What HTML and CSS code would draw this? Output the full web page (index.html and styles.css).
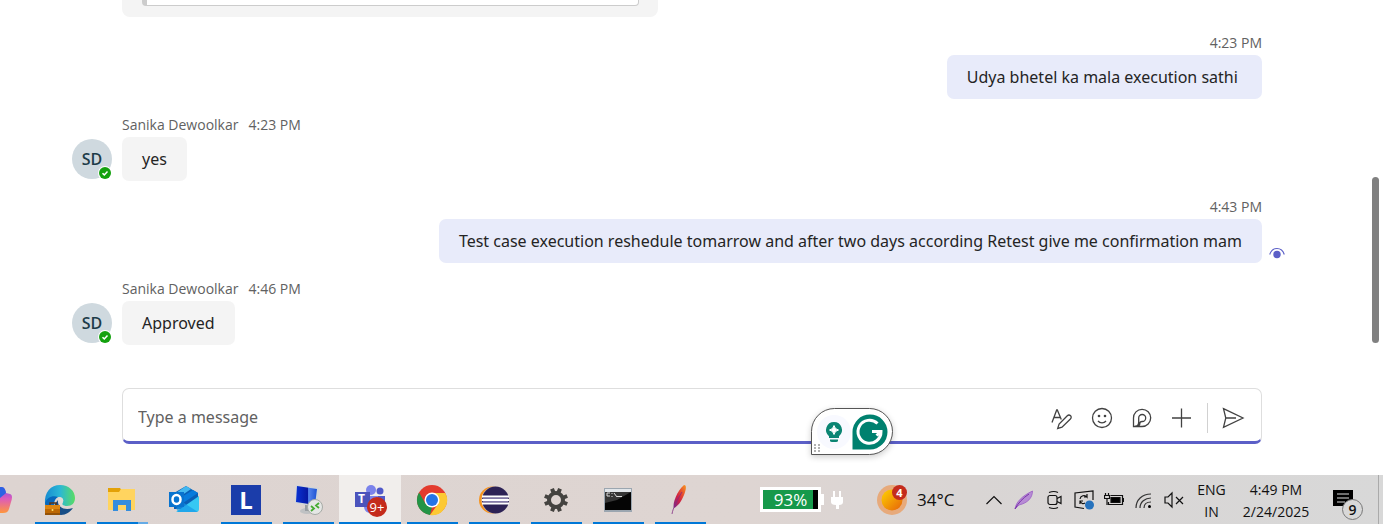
FILE: index.html
```
<!DOCTYPE html>
<html lang="en">

<head>
  <meta charset="UTF-8">
  <meta name="viewport" content="width=device-width, initial-scale=1.0">
  <title>Chat</title>
  <link rel="stylesheet" href="styles.css">
</head>

<body>
  <main class="chat">
    <div class="messages">
      <div class="card">
        <div class="quote"></div>
      </div>

      <div class="message mine">
        <div class="meta"><time>4:23 PM</time></div>
        <p class="bubble">Udya bhetel ka mala execution sathi&nbsp;</p>
      </div>

      <div class="message">
        <div class="avatar">SD
          <svg class="presence" viewBox="0 0 14 14"><circle cx="7" cy="7" r="7" fill="#fff"/><circle cx="7" cy="7" r="6" fill="#13a10e"/><path d="M4.5 7.2l1.8 1.7 3.2-3.4" fill="none" stroke="#fff" stroke-width="1.5"/></svg>
        </div>
        <div class="meta"><span>Sanika Dewoolkar</span><time>4:23 PM</time></div>
        <p class="bubble">yes</p>
      </div>

      <div class="message mine">
        <div class="meta"><time>4:43 PM</time></div>
        <p class="bubble">Test case execution reshedule tomarrow and after two days according Retest give me confirmation mam</p>
        <svg class="seen" viewBox="0 0 16 12"><path d="M.7 7.5C2 3.400 4.700 1.500 8 1.500s6 1.900 7.300 6" fill="none" stroke="#5b5fc7" stroke-width="1.100"/><circle cx="8" cy="7.500" r="3.700" fill="#5b5fc7"/></svg>
      </div>

      <div class="message">
        <div class="avatar">SD
          <svg class="presence" viewBox="0 0 14 14"><circle cx="7" cy="7" r="7" fill="#fff"/><circle cx="7" cy="7" r="6" fill="#13a10e"/><path d="M4.5 7.2l1.8 1.7 3.2-3.4" fill="none" stroke="#fff" stroke-width="1.5"/></svg>
        </div>
        <div class="meta"><span>Sanika Dewoolkar</span><time>4:46 PM</time></div>
        <p class="bubble">Approved</p>
      </div>
    </div>

    <form class="composer">
      <input type="text" aria-label="Type a message" placeholder="Type a message">
      <button type="button" aria-label="Format">
        <svg viewBox="0 0 24 24"><path d="M2 16.500L6.700 4h.6l4 9.500M4 11.500h6"/><path d="M20.600 9.800c-1-1-2.400-.9-3.300 0l-8.200 8.300-1.400 4.300 4.300-1.300 8.400-8.100c.9-.9 1.100-2.300.2-3.200z"/></svg>
      </button>
      <button type="button" aria-label="Emoji">
        <svg viewBox="0 0 24 24"><circle cx="12" cy="12" r="9.500"/><path d="M8 15c2 2.500 6 2.500 8 0"/><circle class="dot" cx="9" cy="10" r="1.300"/><circle class="dot" cx="15" cy="10" r="1.300"/></svg>
      </button>
      <button type="button" aria-label="Loop">
        <svg viewBox="0 0 24 24"><path d="M3.500 20.500V12a8.600 8.600 0 1 1 8.600 8.500z"/><path d="M5 20.300c2.500 0 3.700-1.700 3.700-4.300v-4a3.500 3.500 0 1 1 3.500 3.500c-1.800 0-2.400.7-2.400 2 0 1.500-.9 2.800-2.800 2.800"/></svg>
      </button>
      <button type="button" aria-label="Add">
        <svg viewBox="0 0 24 24"><path d="M11.500 2.500v19M2 12h19"/></svg>
      </button>
      <span class="separator"></span>
      <button type="submit" aria-label="Send">
        <svg viewBox="0 0 24 24"><path d="M2.500 2.700l19.500 9.300-19.500 9.300 2.300-9.300zM4.800 12H15"/></svg>
      </button>

      <div class="assistant">
        <svg class="grip" viewBox="0 0 6 8"><path d="M0 1h2M4 1h2M0 4h2M4 4h2M0 7h2M4 7h2" stroke="#999" stroke-width="1.500"/></svg>
        <svg class="bulb" viewBox="0 0 34 34"><circle cx="17" cy="17" r="17" fill="#f8f9ff"/><path d="M17 7a8 8 0 0 0-5 14.200V23h10v-1.800A8 8 0 0 0 17 7z" fill="#0b8573"/><path d="M13 24.500h8v1q0 1.500-2 1.500h-4q-2 0-2-1.500z" fill="#0b8573"/><path d="M17 10.500q.8 3.700 4.500 4.500-3.700.8-4.500 4.500-.8-3.700-4.500-4.500 3.700-.8 4.500-4.500z" fill="#fff" stroke="#fff"/></svg>
        <svg class="grammar" viewBox="0 0 36 36"><path d="M18 .5a17.500 17.500 0 0 1 0 35H.5V18A17.500 17.500 0 0 1 18 .5z" fill="#00816f"/><path d="M25.500 9.500A11.500 11.500 0 1 0 29 17.500H20M29 17.500l-4.500 4" fill="none" stroke="#fff" stroke-width="3"/></svg>
      </div>
    </form>

    <div class="scroll-thumb"></div>
  </main>

  <footer class="taskbar">
    <nav class="apps" aria-label="Apps">
      <button class="app" aria-label="Copilot">
        <svg viewBox="0 0 32 32"><defs><linearGradient id="copilot" x1="0" y1="0" x2="0" y2="1"><stop offset="0" stop-color="#7b52e8"/><stop offset=".45" stop-color="#dc5bbb"/><stop offset="1" stop-color="#ff963d"/></linearGradient></defs><path d="M18 3c4 0 5 1 6 6l4 1c3 1 2 5 1 8l-2 7c-1 3-3 4-6 4h-9z" fill="url(#copilot)"/><path d="M18 3c4 0 5 1 6 6l-6 5z" fill="#2c62e3"/></svg>
      </button>
      <button class="app open" aria-label="Edge">
        <svg viewBox="0 0 32 32"><defs><linearGradient id="edge"><stop offset="0" stop-color="#168bd1"/><stop offset=".5" stop-color="#2bb7d5"/><stop offset="1" stop-color="#59dc64"/></linearGradient></defs><path d="M1 20C0 8 7 1 16 1c9 0 15 6 15 13 0 5-3 8-8 8-4 0-6-1-4-4 1-3-1-5-4-5-6 0-10 3-14 7z" fill="url(#edge)"/><path d="M1 19c2-6 8-8 13-6-5 3-5 9 0 14l-3 2C4 27 1 24 1 19z" fill="#0868bc"/><path d="M14 16c-1 7 6 11 15 8-3 4-7 7-12 7-7 0-9-9-3-15z" fill="#174d86"/><path d="M15 14c3-1 5 1 4 4-2 3 0 4 4 4-5 2-10-2-8-8z" fill="#e2dad7"/><path d="M1 21h15v10H1z" fill="#bd6804"/><path d="M1 21h15v4H1z" fill="#dc8510"/><path d="M6 21v-2h6v2" fill="none" stroke="#57371c" stroke-width="1.500"/><path d="M1 30h15" stroke="#6b3c0d"/><circle cx="8.500" cy="26" r="1" fill="#ffe169"/></svg>
      </button>
      <button class="app open grouped" aria-label="File Explorer">
        <svg viewBox="0 0 32 32"><path d="M2 4h12l2 3h13v5H2z" fill="#e3a107"/><path d="M15 5h14v21H2V8h11z" fill="#ffd45f"/><path d="M7 27V16h18v11h-5v-6h-8v6z" fill="#348ddd"/></svg>
      </button>
      <button class="app" aria-label="Outlook">
        <svg viewBox="0 0 32 32"><path d="M6 9l12-7 12 7v16H6z" fill="#0a5fb6"/><path d="M8 9l10-7 5 3-13 9z" fill="#42b7ef"/><path d="M12 14l13-8 5 3-15 10z" fill="#087bdc"/><path d="M8 28l23-16v13q0 3-3 3z" fill="#35c8f3"/><path d="M8 24l8-5 14 9H10z" fill="#1595e7" opacity=".65"/><path d="M1 8h15v15H1z" fill="#0873cf"/><ellipse cx="8.500" cy="15.500" rx="4" ry="4.500" fill="none" stroke="#fff" stroke-width="2.500"/></svg>
      </button>
      <button class="app open" aria-label="L">
        <span class="letter-tile">L</span>
      </button>
      <button class="app open" aria-label="Remote Desktop">
        <svg viewBox="0 0 32 32"><defs><linearGradient id="screen"><stop offset="0" stop-color="#0a31d2"/><stop offset=".55" stop-color="#0719a4"/><stop offset=".6" stop-color="#5584ec"/><stop offset="1" stop-color="#1b52d4"/></linearGradient></defs><ellipse cx="15" cy="27" rx="7" ry="3" fill="#bfc1c3"/><path d="M13 20h6v7h-6z" fill="#989da2"/><path d="M4 1l23 3-2 19-22-4z" fill="#d0d5d8"/><path d="M5 2l20 3-2 16-19-3z" fill="url(#screen)"/><circle cx="23" cy="23" r="7.500" fill="#e5e7e5" stroke="#a6aaa6"/><path d="M19 22l3 2.500-3 2.500M27 19l-3 2.500 3 2.500" fill="none" stroke="#45ac32" stroke-width="1.800"/></svg>
      </button>
      <button class="app open active" aria-label="Teams, 9+ notifications">
        <svg viewBox="0 0 32 32"><circle cx="17" cy="6" r="5" fill="#7b83eb"/><circle cx="26" cy="7" r="3.500" fill="#5059c9"/><path d="M22 12h9v9q0 5-5 5h-4z" fill="#5059c9"/><path d="M11 12h13v10q0 7-7 7t-7-7z" fill="#7b83eb"/><path d="M1 8h15v15H1z" fill="#4b53bc"/></svg>
        <span class="teams-letter">T</span>
        <span class="app-badge">9+</span>
      </button>
      <button class="app open" aria-label="Chrome">
        <svg viewBox="0 0 32 32"><circle cx="16" cy="16" r="15" fill="#e33b2e"/><path d="M3 8.500l6.500 11.300L16 23l-2 8A15 15 0 0 1 3 8.500z" fill="#239447"/><path d="M16 9h13.300A15 15 0 0 1 14 31l8-11z" fill="#fcc934"/><circle cx="16" cy="16" r="7.500" fill="#fff"/><circle cx="16" cy="16" r="6" fill="#2474e7"/></svg>
      </button>
      <button class="app open" aria-label="Eclipse">
        <svg viewBox="0 0 32 32"><circle cx="14.500" cy="16" r="13.500" fill="#f7941e"/><circle cx="17" cy="16" r="13.500" fill="#ded3cf"/><circle cx="17.500" cy="16" r="13.500" fill="#2c2255"/><path d="M4 12.500h27M4 16h27M4 19.500h27" stroke="#fff" stroke-width="1.800"/><path d="M5 14.200h25M5 17.800h25" stroke="#aaa1cd"/></svg>
      </button>
      <button class="app open" aria-label="Settings">
        <svg viewBox="0 0 32 32"><g stroke="#444340" stroke-width="4"><path d="M12 4.800l2 5M20 4.800l-2 5M12 27.200l2-5M20 27.200l-2-5M4.800 12l5 2M4.800 20l5-2M27.200 12l-5 2M27.200 20l-5-2"/><circle cx="16" cy="16" r="7" fill="none"/></g></svg>
      </button>
      <button class="app open" aria-label="Command Prompt">
        <svg viewBox="0 0 32 32"><path d="M2 4h28v24H2z" fill="#9ba6b0"/><path d="M3 5h26v3H3z" fill="#e1e5e9"/><path d="M3 8h26v18H3z" fill="#050505"/><path d="M3 8h26L15 16l-12 3z" fill="#353535"/><path d="M8 9H5v3h3M10 9v1M10 12v1M12 9l3 4M15 12.500h5" fill="none" stroke="#ddd"/></svg>
      </button>
      <button class="app open" aria-label="Apache">
        <svg viewBox="0 0 32 32"><defs><linearGradient id="feather" x1="1" y1="0" x2="0" y2="1"><stop offset="0" stop-color="#f79a23"/><stop offset=".35" stop-color="#e64a2e"/><stop offset=".6" stop-color="#cd2146"/><stop offset="1" stop-color="#79268c"/></linearGradient></defs><path d="M20 1c3 0 2 5 0 10-3 7-6 11-10 13-2-4 3-17 10-23z" fill="url(#feather)"/><path d="M8 30c1-6 5-14 10-22" fill="none" stroke="#822b82" stroke-width=".8"/></svg>
      </button>
    </nav>

    <div class="power">
      <span class="charge">93%</span>
      <svg class="plug" viewBox="0 0 12 20"><path d="M2 1h2v6h4V1h2v6h2v5q0 3-4 3v4H5v-4q-5 0-5-3V7h2z" fill="#fff"/></svg>
    </div>

    <button class="weather">
      <svg viewBox="0 0 32 32"><defs><linearGradient id="sun" x1="0" y1="0" x2="1" y2="1"><stop offset="0" stop-color="#ffd300"/><stop offset="1" stop-color="#e6620a"/></linearGradient></defs><circle cx="15" cy="16" r="15" fill="#e7aa7b"/><circle cx="15" cy="16" r="10.500" fill="url(#sun)"/></svg>
      <span class="weather-badge">4</span>
      <span>34°C</span>
    </button>

    <div class="tray">
      <button aria-label="Show hidden icons"><svg viewBox="0 0 20 20"><path d="M2.500 14L10 6.500l7.500 7.500"/></svg></button>
      <button aria-label="Pen"><svg viewBox="0 0 20 20"><path d="M1 19C2 12 8 6 18.500 1c0 7-5 12-13.500 14z" fill="#b78bd5" stroke="#9a5fc4" stroke-width=".8"/><path d="M1 19C4 13 9 8 15 4" stroke="#7830a8" stroke-width="1"/></svg></button>
      <button aria-label="Meet now"><svg viewBox="0 0 20 20"><rect x="4" y="5.500" width="9" height="9" rx="2"/><path d="M13 8.500l4-2v7l-4-2M5 2.500q5-2 9 0M5 17.500q5 2 9 0"/></svg></button>
      <button aria-label="Update"><svg viewBox="0 0 20 20"><path d="M19 10V1L1 3v14l9 1.500M6 9a4 4 0 0 1 7-2V4M13 7h-3M6 14v-3h3M6 11q2 4 5 2"/><circle cx="15.500" cy="15" r="4.500" fill="#2672bd" stroke="none"/></svg></button>
      <button aria-label="Battery"><svg viewBox="0 0 20 20"><path d="M6.500 5.500h12v9H4.500V12M18.500 8.500h1v3h-1M1.500 3v3M4.500 3v3M.5 5.500h5v3h-5zM3 9v6"/><path d="M7 7.500h9v5H7z" fill="#000"/></svg></button>
      <button aria-label="Wi-Fi"><svg viewBox="0 0 20 20"><path d="M2 18C2 10 8 4 17 4M6 18c0-6 5-10 11-10M10 18c0-4 3-6 7-6" stroke="#333"/><circle cx="15.500" cy="16.500" r="1.500" fill="#000" stroke="none"/></svg></button>
      <button aria-label="Volume muted"><svg viewBox="0 0 20 20"><path d="M1 7h3l4-4v14l-4-4H1zM12 7l7 7M19 7l-7 7"/></svg></button>
    </div>

    <button class="language"><span>ENG</span><span>IN</span></button>
    <button class="clock"><span>4:49 PM</span><span>2/24/2025</span></button>
    <button class="notifications" aria-label="9 notifications">
      <svg viewBox="0 0 20 20"><path d="M0 0h20v16h-4v4l-4-4H0z" fill="#000"/><path d="M4 4h12M4 8h12M4 12h8" stroke="#ddd" stroke-width="1"/></svg>
      <span>9</span>
    </button>
    <button class="show-desktop" aria-label="Show desktop"></button>
  </footer>
</body>

</html>
```
FILE: styles.css
```
* {
  box-sizing: border-box;
}

:root {
  --brand: #5b5fc7;
  --blue: #0078d7;
  --text: #242424;
  --muted: #616161;
}

body {
  display: flex;
  flex-direction: column;
  height: 100vh;
  margin: 0;
  overflow: hidden;
  background: #fff;
  color: var(--text);
  font-family: "Open Sans", "Noto Sans", sans-serif;
}

button,
input {
  padding: 0;
  border: 0;
  background: none;
  color: inherit;
  font: inherit;
}

svg {
  display: block;
  flex-shrink: 0;
}

/* Conversation */
.chat {
  position: relative;
  display: flex;
  flex: 1;
  flex-direction: column;
  min-height: 0;
  padding: 0 121px 31px 122px;
}

.messages {
  display: flex;
  flex: 1;
  flex-direction: column;
  justify-content: flex-end;
  min-height: 0;
  margin-bottom: 43px;
}

.card {
  flex-shrink: 0;
  width: 47%;
  height: 60px;
  padding: 0 19px 11px 20px;
  border-radius: 8px;
  background: #f4f4f4;
}

.quote {
  height: 100%;
  border: 1px solid #ccc;
  border-left: 5px solid #ccc;
  border-radius: 4px;
  background: #fff;
}

.message {
  position: relative;
  display: flex;
  flex-direction: column;
  align-items: flex-start;
  margin-top: 16px;
}

.mine {
  align-items: flex-end;
}

.meta {
  display: flex;
  gap: 10px;
  margin-bottom: 2px;
  color: var(--muted);
  font-size: 14px;
  line-height: 20px;
}

.bubble {
  margin: 0;
  padding: 10px 20px;
  border-radius: 7px;
  background: #f4f4f4;
  font-family: "Noto Sans", "Open Sans", sans-serif;
  font-size: 16px;
  line-height: 24px;
}

.mine .bubble {
  background: #e8ebfa;
}

.avatar {
  position: absolute;
  bottom: 2px;
  left: -50px;
  width: 40px;
  height: 40px;
  border-radius: 50%;
  background: #cfd9df;
  color: #1d3c49;
  font-size: 16px;
  font-weight: 600;
  line-height: 40px;
  text-align: center;
}

.presence {
  position: absolute;
  right: 0;
  bottom: -1px;
  width: 14px;
}

.seen {
  position: absolute;
  right: -23px;
  bottom: 4px;
  width: 16px;
}

.composer {
  position: relative;
  display: flex;
  align-items: center;
  height: 56px;
  padding: 5px 8px 0 15px;
  border: 1px solid #dedede;
  border-bottom: 3px solid var(--brand);
  border-radius: 7px;
}

.composer input {
  flex: 1;
  min-width: 0;
  height: 40px;
  padding-bottom: 2px;
  outline: 0;
  font-family: "Noto Sans", "Open Sans", sans-serif;
  font-size: 16px;
}

.composer input::placeholder {
  color: var(--muted);
  opacity: 1;
}

.composer button {
  display: grid;
  place-items: center;
  width: 40px;
  height: 40px;
}

.composer button svg {
  width: 24px;
  fill: none;
  stroke: #424242;
  stroke-width: 1.3;
}

.composer .dot {
  fill: #424242;
  stroke: none;
}

.separator {
  width: 1px;
  height: 30px;
  margin: 0 5px;
  background: #d1d1d1;
}

.assistant {
  position: absolute;
  right: 368px;
  bottom: -14px;
  display: flex;
  align-items: center;
  justify-content: flex-end;
  gap: 1px;
  width: 82px;
  height: 47px;
  padding-right: 4px;
  border: 1px solid #555;
  border-radius: 24px 24px 24px 0;
  background: #fff;
  box-shadow: 0 2px 6px #0003;
}

.grip {
  position: absolute;
  bottom: 2px;
  left: 2px;
  width: 6px;
}

.bulb {
  width: 34px;
}

.grammar {
  width: 36px;
}

.scroll-thumb {
  position: absolute;
  top: 177px;
  right: 4px;
  width: 7px;
  height: 166px;
  border-radius: 4px;
  background: #808080;
}

/* Taskbar */
.taskbar {
  display: flex;
  flex-shrink: 0;
  height: 49px;
  background: linear-gradient(90deg, #ddd4d1, #ded5d2 54%, #d9d5d4 70%, #d8d8d8);
  color: #111;
}

.apps {
  display: flex;
  margin: 0 auto 0 -33px;
}

.app {
  position: relative;
  display: grid;
  place-items: center;
  width: 62px;
  height: 49px;
}

.app svg {
  width: 32px;
}

.open::after {
  content: "";
  position: absolute;
  right: 5px;
  bottom: 0;
  left: 6px;
  height: 2px;
  background: var(--blue);
}

.grouped::after {
  background: linear-gradient(90deg, var(--blue) 80%, #65abe6 80%);
}

.active {
  background: #f1eeec;
}

.active::after {
  right: 0;
  left: 0;
}

.letter-tile {
  width: 30px;
  height: 30px;
  background: #1b3daa;
  color: #fff;
  font-size: 24px;
  font-weight: 700;
  line-height: 29px;
  text-align: center;
}

.teams-letter {
  position: absolute;
  top: 14px;
  left: 19px;
  color: #fff;
  font-size: 12px;
  font-weight: 700;
  line-height: 20px;
}

.app-badge {
  position: absolute;
  top: 22px;
  left: 28px;
  width: 20px;
  height: 20px;
  border-radius: 50%;
  background: #c42b1c;
  color: #fff;
  font-size: 13px;
  line-height: 20px;
  text-align: center;
}

.power {
  display: flex;
  align-items: center;
  gap: 10px;
  margin-right: 29px;
}

.charge {
  position: relative;
  width: 61px;
  height: 25px;
  border: 3px solid #fff;
  background: linear-gradient(90deg, #16994b 50px, #000 50px);
  color: #fff;
  font-size: 17px;
  line-height: 19px;
  text-align: center;
}

.charge::after {
  content: "";
  position: absolute;
  top: 4px;
  right: -6px;
  width: 3px;
  height: 11px;
  background: #fff;
}

.plug {
  width: 12px;
}

.weather {
  position: relative;
  display: flex;
  align-items: center;
  gap: 8px;
  width: 107px;
  padding-left: 5px;
  font-size: 17px;
}

.weather svg {
  width: 32px;
}

.weather-badge {
  position: absolute;
  top: 10px;
  left: 20px;
  width: 15px;
  height: 15px;
  border-radius: 50%;
  background: #c42b1c;
  color: #fff;
  font-size: 11px;
  font-weight: 700;
  line-height: 15px;
  text-align: center;
}

.tray {
  display: flex;
}

.tray button {
  display: grid;
  place-items: center;
  width: 30px;
}

.tray svg {
  width: 20px;
  fill: none;
  stroke: #111;
  stroke-width: 1.2;
}

.language,
.clock {
  display: flex;
  flex-direction: column;
  align-items: center;
  justify-content: center;
  width: 45px;
  padding-top: 2px;
  font-size: 14px;
  line-height: 22px;
}

.clock {
  width: 84px;
}

.notifications {
  position: relative;
  width: 60px;
  padding-left: 15px;
}

.notifications svg {
  width: 20px;
}

.notifications span {
  position: absolute;
  top: 24px;
  left: 24px;
  width: 21px;
  height: 21px;
  border: 1px solid #777;
  border-radius: 50%;
  background: #d8d8d8;
  font-size: 14px;
  font-weight: 600;
  line-height: 19px;
  text-align: center;
}

.show-desktop {
  width: 5px;
  border-left: 1px solid #aaa;
}
```
